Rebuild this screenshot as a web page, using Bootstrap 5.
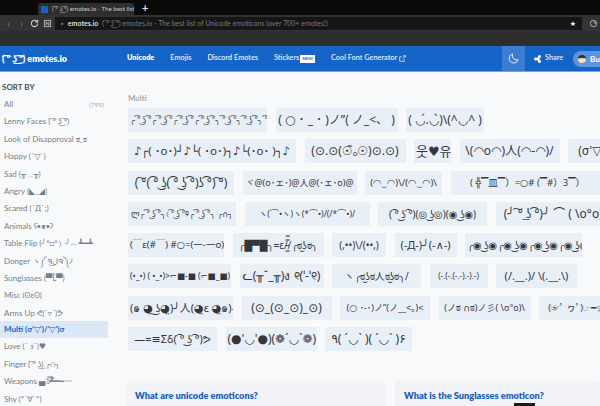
<!DOCTYPE html>
<html lang="en">
<head>
<meta charset="UTF-8">
<title>emotes.io</title>
<link href="https://cdn.jsdelivr.net/npm/bootstrap@5.3.0/dist/css/bootstrap.min.css" rel="stylesheet">
<style>
    html, body { height: 406px; overflow: hidden; }
    body { background: #f8f9fb; font-family: "Lato", "Noto Sans", "DejaVu Sans", sans-serif; font-size: 10px; color: #333; }

    /* browser chrome */
    .tabstrip { height: 15px; background: #0a0a0a; padding-left: 38px; }
    .browser-tab { width: 96px; height: 12px; margin-top: 3px; background: #2e2e2e; color: #c9c9c9; font-size: 6.2px; border-radius: 3px 3px 0 0; padding-left: 3px; white-space: nowrap; overflow: hidden; }
    .tab-icon { width: 7px; height: 7px; background: #1b62b8; flex: none; }
    .tab-plus { color: #eee; font-size: 11px; font-weight: 700; margin-left: 5px; line-height: 15px; }
    .toolbar { height: 16px; background: #333; color: #aaa; padding-left: 2px; }
    .tool-glyph { width: 13px; flex: none; text-align: center; font-size: 9px; line-height: 1; color: #888; }
    .omnibox { flex: 1; height: 13px; margin: 0 5px 0 1px; background: #161616; padding: 0 6px; font-size: 7px; color: #7a7a7a; white-space: nowrap; overflow: hidden; }
    .omnibox b { color: #ddd; }
    .bookmarks { height: 15px; background: #2e2e2e; }

    /* site navbar */
    .site-nav { height: 26px; background: #1565c8; border-bottom: 1px solid #6fa3e4; color: #fff; padding: 0; flex-wrap: nowrap; }
    .site-brand { width: 127px; flex: none; padding-left: 2px; font-weight: 800; font-size: 9px; white-space: nowrap; }
    .site-link { color: #e6effa; font-size: 7.3px; font-weight: 600; white-space: nowrap; }
    .site-link.on { color: #fff; font-weight: 800; }
    .tag-new { background: #fff; color: #1565c8; font-size: 4.5px; font-weight: 700; padding: 1px 2px; line-height: 6px; margin-left: 1px; }
    .moon-box { width: 23px; height: 25px; background: #3a7dd1; margin-left: auto; flex: none; }
    .share-link { margin-left: 9px; width: 39px; flex: none; }
    .buy-pill { width: 27px; height: 16px; border-radius: 8px 0 0 8px; background: #5b95dc; padding-left: 5px; font-size: 8px; font-weight: 700; flex: none; white-space: nowrap; }
    .buy-head { width: 8px; height: 8px; border-radius: 50%; background: #f3dcc0; border-top: 3px solid #33302e; flex: none; }

    /* sidebar */
    .side-col { width: 126px; flex: none; }
    .sort-title { font-size: 8px; font-weight: 700; color: #4a4f57; padding: 9px 0 0 2px; height: 24px; }
    .side-item { background: transparent; border: 0; border-radius: 0; width: 108px; height: 17.4px; padding: 0 0 0 4px; color: #777d86; font-size: 8px; line-height: 17px; white-space: nowrap; overflow: hidden; }
    .side-item.active { background: #dde8f6; color: #1565c8; font-weight: 700; }
    .side-count { font-size: 6.5px; color: #a3a8b0; margin-right: 4px; }

    /* emoticon chips */
    .main-col { min-width: 0; flex: 1; overflow: hidden; padding-top: 20px; }
    .group-label { font-size: 8px; color: #8a8f96; height: 16px; padding-top: 1px; margin-left: 2px; line-height: 10px; }
    .chip-row { height: 24px; margin-bottom: 7.3px; margin-left: 2px; gap: 8.5px; flex-wrap: nowrap; }
    .emote-chip { height: 24px; flex: none; background: #e9eff7; color: #33373d; font-family: "Noto Sans", "DejaVu Sans", "Noto Sans CJK JP", sans-serif; white-space: nowrap; overflow: hidden; text-align: center; line-height: 24px; padding: 0 2px; }

    /* info cards */
    .info-row { margin-top: 30px; gap: 9px; flex-wrap: nowrap; }
    .info-card { height: 25px; flex: none; background: #f1f3f7; border: 0; border-radius: 2px; padding: 8px 9px 0; font-size: 9.2px; font-weight: 800; color: #1f62bd; white-space: nowrap; overflow: hidden; }
    .info-a { width: 260px; }
    .info-b { width: 205px; }
    .info-shades { background: #1c1c1c; width: 21px; height: 3px; flex: none; margin-left: 110px; }
</style>
</head>
<body>

<div class="tabstrip d-flex align-items-start">
    <div class="browser-tab d-flex align-items-center gap-1"><span class="tab-icon"></span>( ͡° ͜ʖ ͡°) emotes.io - The best list</div>
    <span class="tab-plus ms-2">+</span>
</div>
<div class="toolbar d-flex align-items-center">
    <span class="tool-glyph">‹</span>
    <span class="tool-glyph">›</span>
    <svg class="tool-glyph" height="9" viewBox="0 0 10 10" fill="none" stroke="#ccc" stroke-width="1.2"><path d="M8.5 5a3.5 3.5 0 1 1-1-2.5M8.5 .8v2.4H6"/></svg>
    <svg class="tool-glyph" height="9" viewBox="0 0 10 10" fill="none" stroke="#bbb"><rect x="1.5" y="1.5" width="7" height="7"/><path d="M3.5 7V3l3 4V3"/></svg>
    <div class="omnibox d-flex align-items-center gap-1">
        <span>▪</span><b>emotes.io</b><span>( ͡° ͜ʖ ͡°) emotes.io - The best list of Unicode emoticons (over 700+ emotes!)</span>
        <span class="ms-auto text-white">★</span>
    </div>
    <svg class="tool-glyph" height="9" viewBox="0 0 10 10" fill="none" stroke="#bbb"><circle cx="5" cy="5" r="3.5"/><path d="M5 3.5h2v2"/></svg>
</div>
<div class="bookmarks"></div>

<nav class="navbar site-nav d-flex align-items-center">
    <div class="site-brand">( ͡° ͜ʖ ͡°) emotes.io</div>
    <div class="d-flex align-items-center flex-grow-1">
        <span class="site-link on me-3">Unicode</span>
        <span class="site-link me-3">Emojis</span>
        <span class="site-link me-3">Discord Emotes</span>
        <span class="site-link">Stickers</span><span class="tag-new me-3">NEW</span>
        <span class="site-link">Cool Font Generator
            <svg width="7" height="7" viewBox="0 0 10 10" fill="none" stroke="#fff"><path d="M7.5 6v3h-6.5V2.500h3M5 5l4-4M6 1h3v3"/></svg>
        </span>
        <div class="moon-box d-flex align-items-center justify-content-center">
            <svg width="11" height="11" viewBox="0 0 12 12" fill="none" stroke="#fff"><path d="M5 1a5 5 0 1 0 6 6.500A5 5 0 0 1 5 1z"/></svg>
        </div>
        <span class="site-link share-link d-flex align-items-center gap-1">
            <svg width="7" height="8" viewBox="0 0 7 8" fill="#fff" stroke="#fff" stroke-width=".7"><circle cx="5.500" cy="1.500" r="1.200"/><circle cx="5.500" cy="6.500" r="1.200"/><circle cx="1.500" cy="4" r="1.200"/><path d="M5.500 1.500 1.500 4l4 2.500"/></svg>
            Share
        </span>
        <div class="buy-pill d-flex align-items-center gap-1"><span class="buy-head"></span>Bu</div>
    </div>
</nav>

<div class="d-flex">
    <aside class="side-col">
        <div class="sort-title">SORT BY</div>
        <div class="list-group">
            <div class="list-group-item side-item d-flex justify-content-between"><span>All</span><span class="side-count">(795)</span></div>
            <div class="list-group-item side-item">Lenny Faces ( ͡° ͜ʖ ͡°)</div>
            <div class="list-group-item side-item">Look of Disapproval ಠ_ಠ</div>
            <div class="list-group-item side-item">Happy (´▽`)</div>
            <div class="list-group-item side-item">Sad (╥﹏╥)</div>
            <div class="list-group-item side-item">Angry (◣_◢)</div>
            <div class="list-group-item side-item">Scared (´Д`;)</div>
            <div class="list-group-item side-item">Animals ʕ•ᴥ•ʔ</div>
            <div class="list-group-item side-item">Table Flip (╯°□°）╯︵┻━┻</div>
            <div class="list-group-item side-item">Donger ヽ༼ຈل͜ຈ༽ﾉ</div>
            <div class="list-group-item side-item">Sunglasses (▀̿Ĺ̯▀̿)</div>
            <div class="list-group-item side-item">Misc (ʘεʘ)</div>
            <div class="list-group-item side-item">Arms Up ᕙ(`▿´)ᕗ</div>
            <div class="list-group-item side-item active">Multi (σ'▽')/'▽')σ</div>
            <div class="list-group-item side-item">Love (´ з`)♥</div>
            <div class="list-group-item side-item">Finger ( ͡° ͜ʖ) ╭∩╮</div>
            <div class="list-group-item side-item">Weapons ▄︻̷̿┻̿═━一</div>
            <div class="list-group-item side-item">Shy (*´∀`*)</div>
        </div>
    </aside>

    <main class="main-col">
        <div class="group-label">Multi</div>
        <div id="chips"></div>
        <div class="info-row d-flex">
            <div class="card info-card info-a">What are unicode emoticons?</div>
            <div class="card info-card info-b">What is the Sunglasses emoticon?<div class="info-shades"></div></div>
        </div>
    </main>
</div>

<script src="https://cdn.jsdelivr.net/npm/bootstrap@5.3.0/dist/js/bootstrap.bundle.min.js"></script>
<script>
    // [text, chip width, font size]
    const rows = [
        [['╭ ͡° ͜ʖ ͡°╭ ͡° ͜ʖ ͡°╭ ͡° ͜ʖ ͡°╭ ͡° ͜ʖ ͡°╮ ͡° ͜ʖ ͡°╮ ͡° ͜ʖ ͡°╮ ͡° ͜ʖ ͡°╮', 139, 8], ['( ○ ･ _ ･ )ノ”( ノ_<、 )', 122, 12], ['( ◡́.◡̀)\\(^◡^ )', 78, 12]],
        [['♪┌( ･o･)┘♪└( ･o･)┐♪└(･o･ )┐♪', 168, 11.5], ['(⊙.⊙(☉̃ₒ☉)⊙.⊙)', 101, 12], ['웃♥유', 37, 13], ['\\(◠o◠)人(◠-◠)/', 100, 12], ['(σ\'▽\')/\'▽\')σ', 80, 12]],
        [['( ͠°( ͡° ͜ʖ( ͡° ͜ʖ ͡°)ʖ ͡°) ͠°)', 106, 12], ['ヾ@(o･ェ･)@人@(･ェ･o)@', 114, 9], ['(◠‿◠)\\/(◠‿◠)\\', 77, 9.500], ['( ╬▔皿▔）=○# (▔#）3▔）', 154, 9.500]],
        [['ლ╭ ͡° ͜ʖ ͡°╮ଽ ͡° ͜ʖ ͡°୨╭ ͡° ͜ʖ ͡°╮ ╭∩╮', 108, 8], ['ヽ(´¯`•ヽ)ヽ(*´¯`•)/(/*´¯`•)/', 125, 8.500], ['( ͡° ͜ʖ ͡°)(◎ ͜ʖ◎)(◉ ͜ʖ◉)', 109, 10], ['(╯ ͠° ͟ʖ ͡°)╯ ⌒ ( \\o°o)\\', 120, 12]],
        [['(￣ε(#￣) #○=(一-一o)', 96, 9.500], ['╭█▀█╮=ε/̵͇̿̿/╭ಠ͜ʖಠ╮', 91, 10], ['(‚••)\\/(••‚)', 54, 10], ['(-Д-)╯(-∧-)', 62, 11], ['╭◉ ͜ʖ◉╭◉ ͜ʖ◉╭◉ ͜ʖ◉╭◉ ͜ʖ◉╮', 117, 10]],
        [['(•_•) ( •_•)>⌐■-■ (⌐■_■)', 103, 8.5], ['ᓚ(╥˘_╥)ง ୧(ˈ-ˈ୧)', 84, 12], ['ヽ╭ಠ͜ʖಠ人ಠ͜ʖಠ╮/', 89, 10], ['(-.(-.(-.-).-).-)', 58, 8], ['(/.__.)/ \\(.__.\\)', 81, 11]],
        [['(๑ ◕̤ ͜ʖ◕̤)╯人(◕̤ε ◕̤๑)-', 105, 11], ['(⊙_(⊙_⊙)_⊙)', 90, 12], ['(○ ･-･)ノ”(ノ__<。)<', 90, 9], ['(ノಠ ∩ಠ)ノ彡( \\o°o)\\', 92, 9], ['(☞ﾟ ヮﾟ)☞━☆ﾟ', 80, 9]],
        [['—=≡Σδ( ͡° ͜ʖ ͡°)ᕗ', 89, 11], ['(●\'◡\'●)(❁´◡`❁)', 91, 12], ['٩( ´◡` )( ´◡` )۶', 87, 12]]
    ];

    const chips = document.getElementById('chips');
    rows.forEach(row => {
        const line = document.createElement('div');
        line.className = 'chip-row d-flex';
        row.forEach(([text, width, size]) => {
            const chip = document.createElement('div');
            chip.className = 'emote-chip';
            chip.textContent = text;
            chip.style.width = width + 'px';
            chip.style.fontSize = size + 'px';
            line.appendChild(chip);
        });
        chips.appendChild(line);
    });
</script>
</body>
</html>
